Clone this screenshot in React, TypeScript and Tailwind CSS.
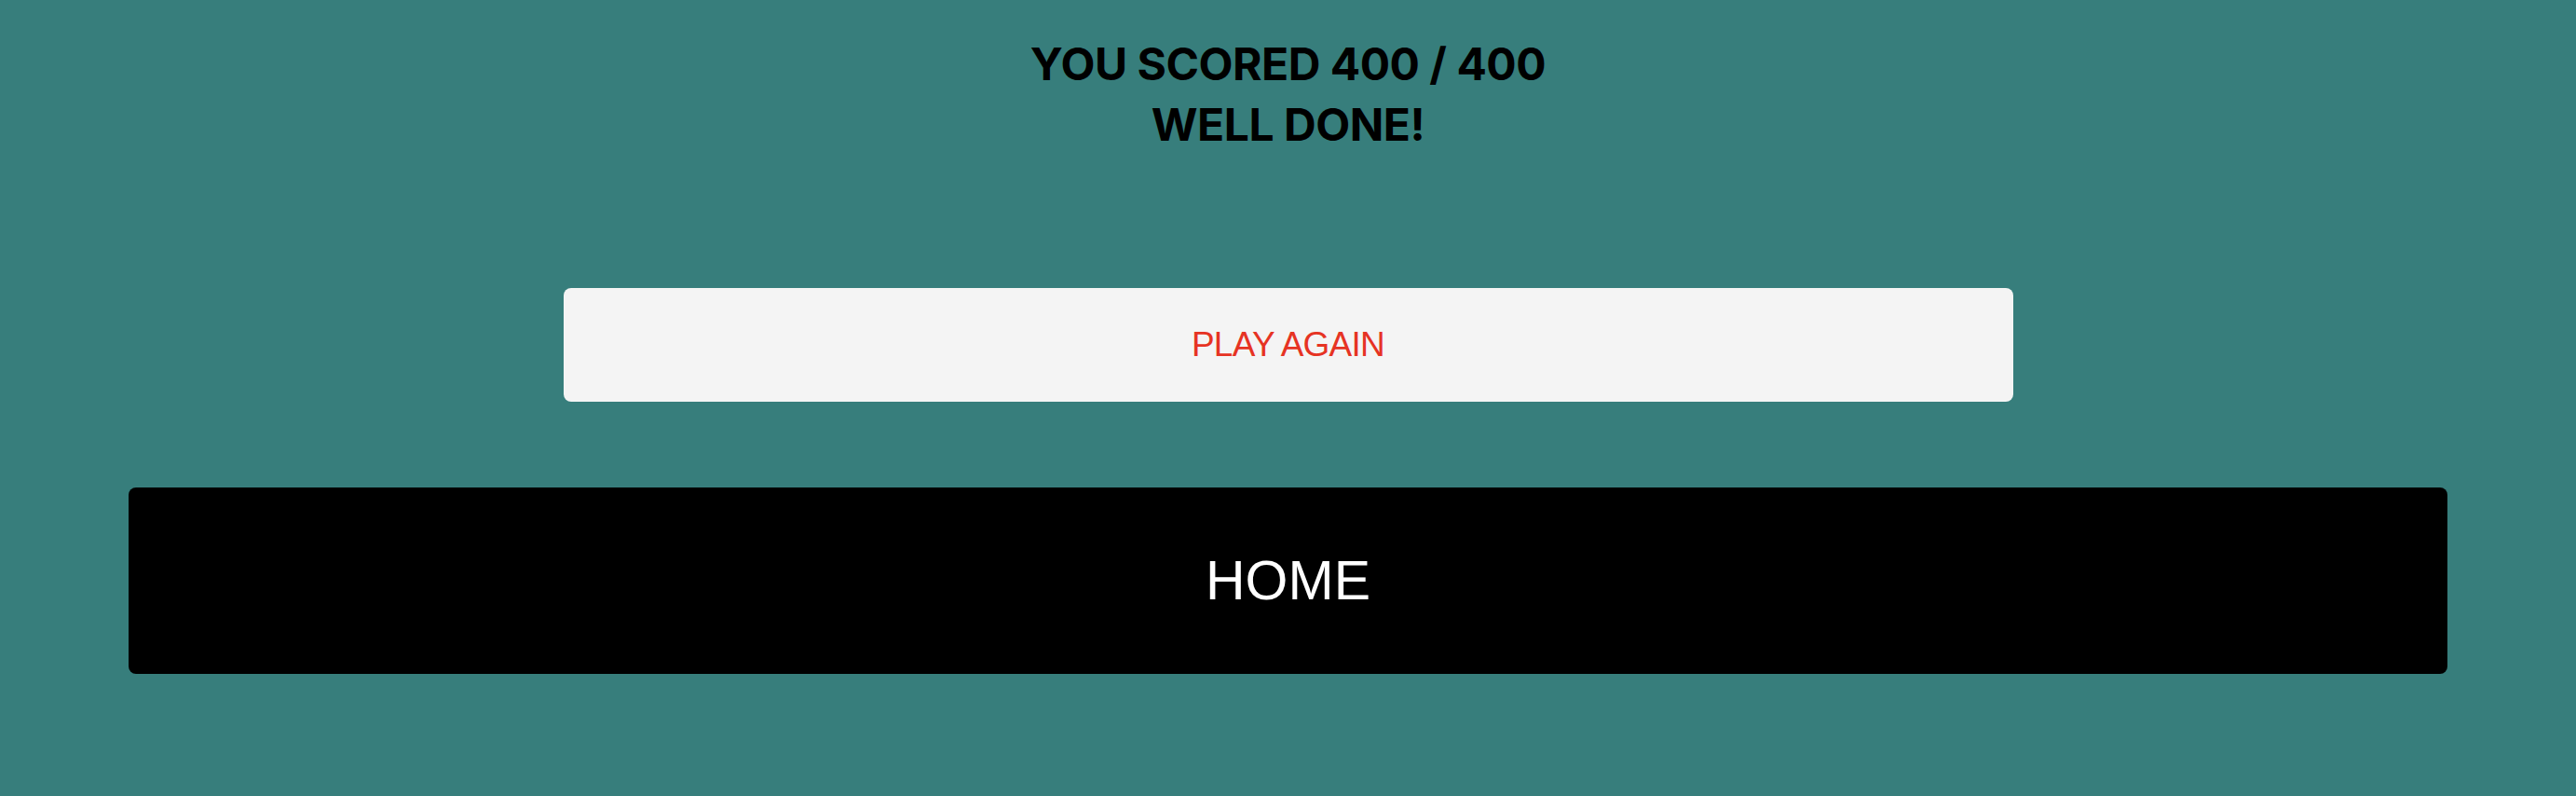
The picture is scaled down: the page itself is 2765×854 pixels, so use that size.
export default function App() {
  return (
    <div className="min-h-screen w-full bg-[#377e7c] flex flex-col items-center pt-[36px]">
      <h1 className="text-center font-bold text-black text-[48px] leading-[65px] tracking-[-0.01em] font-['Inter','Noto_Sans',sans-serif]">
        <div>YOU SCORED 400 / 400</div>
        <div>WELL DONE!</div>
      </h1>

      <button className="mt-[143px] w-[1556px] h-[122px] rounded-lg bg-[#f4f4f4] text-[#e63323] text-[37px] tracking-[-0.02em] flex items-center justify-center font-['Liberation_Sans',Arial,sans-serif]">
        PLAY AGAIN
      </button>

      <button className="mt-[92px] w-[90%] h-[200px] rounded-lg bg-black text-white text-[59px] flex items-center justify-center font-['Liberation_Sans',Arial,sans-serif]">
        HOME
      </button>
    </div>
  );
}
